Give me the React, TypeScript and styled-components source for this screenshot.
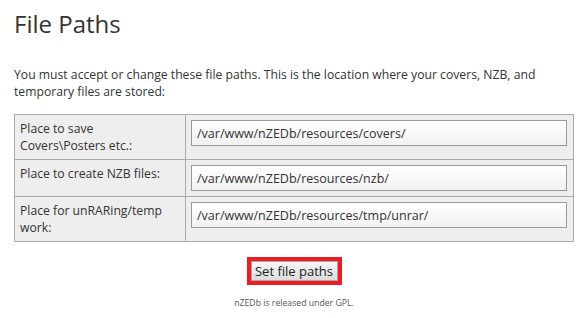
import styled, { createGlobalStyle } from 'styled-components'

const GlobalStyle = createGlobalStyle`
  body {
    margin: 0;
    background: #fff;
    font-family: "Open Sans", "Noto Sans", sans-serif;
    color: #333;
  }
`

const Page = styled.div`
  padding: 0 14px;
`

const Title = styled.h1`
  margin: 7px 0 0;
  font-size: 24px;
  line-height: 33px;
  font-weight: normal;
  color: #333;
`

const Intro = styled.p`
  margin: 26px 0 0;
  font-size: 12.2px;
  line-height: 17px;
  color: #333;
`

const PathTable = styled.table`
  margin-top: 14px;
  width: 560px;
  border-collapse: collapse;
  border: 1px solid #aaa;
  background: #eee;
`

const Cell = styled.td<{ $label?: boolean }>`
  border: 1px solid #aaa;
  padding: 5px;
  vertical-align: top;
  font-size: 12.2px;
  line-height: 17px;
  color: #333;
  width: ${(p) => (p.$label ? '160px' : 'auto')};
`

const PathInput = styled.input`
  box-sizing: border-box;
  display: block;
  width: 376px;
  height: 26px;
  margin: 0;
  padding: 0 5px;
  border: 1px solid #999;
  border-radius: 0;
  background: linear-gradient(#fff, #f1f1f1);
  font-family: inherit;
  font-size: 12.5px;
  color: #333;
`

const Actions = styled.div`
  margin-top: 15px;
  text-align: center;
`

const ButtonFrame = styled.span`
  display: inline-block;
  border: 4px solid #ec1c24;
  line-height: 0;
`

const SubmitButton = styled.button`
  height: 20px;
  width: 87px;
  padding: 0;
  border: 1px solid #a6a6a6;
  border-radius: 0;
  background: linear-gradient(#f6f6f6, #dcdcdc);
  font-family: inherit;
  font-size: 13px;
  line-height: 18px;
  color: #222;
`

const Footer = styled.p`
  margin: 12px 0 0;
  text-align: center;
  font-size: 8.7px;
  color: #555;
`

const paths = [
  { label: 'Place to save Covers\\Posters etc.:', value: '/var/www/nZEDb/resources/covers/' },
  { label: 'Place to create NZB files:', value: '/var/www/nZEDb/resources/nzb/' },
  { label: 'Place for unRARing/temp work:', value: '/var/www/nZEDb/resources/tmp/unrar/' },
]

export default function App() {
  return (
    <>
      <GlobalStyle />
      <Page>
        <Title>File Paths</Title>
        <Intro>
          You must accept or change these file paths. This is the location where your covers, NZB, and
          temporary files are stored:
        </Intro>
        <PathTable>
          <tbody>
            {paths.map((p) => (
              <tr key={p.label}>
                <Cell $label>{p.label}</Cell>
                <Cell>
                  <PathInput defaultValue={p.value} />
                </Cell>
              </tr>
            ))}
          </tbody>
        </PathTable>
        <Actions>
          <ButtonFrame>
            <SubmitButton>Set file paths</SubmitButton>
          </ButtonFrame>
        </Actions>
        <Footer>nZEDb is released under GPL.</Footer>
      </Page>
    </>
  )
}
